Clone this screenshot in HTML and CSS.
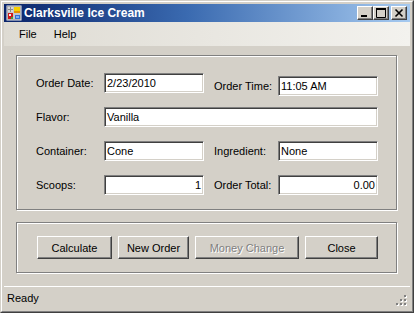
FILE: index.html
```html
<!DOCTYPE html>
<html>
<head>
<meta charset="utf-8">
<title>Clarksville Ice Cream</title>
<link rel="stylesheet" href="styles.css">
</head>
<body>
<div class="window">
  <div class="frame">
    <div class="titlebar">
      <svg class="app-icon" width="16" height="16" viewBox="0 0 16 16">
        <rect x="1" y="1" width="14" height="14" fill="#c8c8c8" stroke="#f4f4f4" stroke-width="1"/>
        <rect x="1.5" y="1.5" width="13" height="13" fill="none" stroke="#9a9a9a" stroke-width="0.6"/>
        <rect x="2" y="2" width="5" height="5" fill="#d8d8d8"/>
        <path d="M2 4.5H7M4.5 2V7" stroke="#8a8a8a" stroke-width="1"/>
        <rect x="8" y="2" width="6" height="6" fill="#f8d000"/>
        <rect x="8" y="6" width="6" height="2" fill="#e89000"/>
        <rect x="2" y="8" width="5" height="6" fill="#d01818"/>
        <rect x="3" y="9" width="2" height="2" fill="#f0f0f0"/>
        <rect x="5" y="12" width="2" height="2" fill="#40a040"/>
        <rect x="9" y="10" width="5" height="4" fill="#3070d8"/>
        <rect x="10" y="11" width="3" height="2" fill="#80b0f0"/>
      </svg>
      <span class="title">Clarksville Ice Cream</span>
      <div class="caption-buttons">
        <div class="cap-btn">
          <svg width="14" height="12" viewBox="0 0 14 12"><rect x="3" y="8" width="6" height="2" fill="#000"/></svg>
        </div>
        <div class="cap-btn">
          <svg width="14" height="12" viewBox="0 0 14 12"><path d="M2.5 1.5H11.5V10.5H2.5Z" fill="none" stroke="#000"/><rect x="2" y="1" width="10" height="2" fill="#000"/></svg>
        </div>
        <div class="cap-btn close">
          <svg width="14" height="12" viewBox="0 0 14 12"><path d="M3.5 2.5L10.5 9.5M10.5 2.5L3.5 9.5" stroke="#000" stroke-width="1.6"/></svg>
        </div>
      </div>
    </div>
    <div class="menubar">
      <span class="menu-item">File</span>
      <span class="menu-item">Help</span>
    </div>
    <div class="client">
      <div class="group g1">
        <div class="form-grid">
          <div class="lbl">Order Date:</div>
          <div class="tb">2/23/2010</div>
          <div class="lbl lbl2 shift">Order Time:</div>
          <div class="tb shift">11:05 AM</div>

          <div class="lbl">Flavor:</div>
          <div class="tb wide">Vanilla</div>

          <div class="lbl">Container:</div>
          <div class="tb">Cone</div>
          <div class="lbl lbl2">Ingredient:</div>
          <div class="tb">None</div>

          <div class="lbl">Scoops:</div>
          <div class="tb right">1</div>
          <div class="lbl lbl2">Order Total:</div>
          <div class="tb right">0.00</div>
        </div>
      </div>
      <div class="group g2">
        <div class="btn w-calc">Calculate</div>
        <div class="btn w-new">New Order</div>
        <div class="btn w-money disabled">Money Change</div>
        <div class="btn w-close">Close</div>
      </div>
    </div>
    <div class="statusbar">
      <span class="status-text">Ready</span>
      <svg class="grip" width="12" height="12" viewBox="0 0 12 12">
        <g fill="#fff">
          <rect x="10" y="2" width="2" height="2"/>
          <rect x="6" y="6" width="2" height="2"/>
          <rect x="10" y="6" width="2" height="2"/>
          <rect x="2" y="10" width="2" height="2"/>
          <rect x="6" y="10" width="2" height="2"/>
          <rect x="10" y="10" width="2" height="2"/>
        </g>
        <g fill="#808080">
          <rect x="9" y="1" width="2" height="2"/>
          <rect x="5" y="5" width="2" height="2"/>
          <rect x="9" y="5" width="2" height="2"/>
          <rect x="1" y="9" width="2" height="2"/>
          <rect x="5" y="9" width="2" height="2"/>
          <rect x="9" y="9" width="2" height="2"/>
        </g>
      </svg>
    </div>
  </div>
</div>
</body>
</html>
```

FILE: styles.css
```css
html, body {
  margin: 0;
  padding: 0;
  background: #d4d0c8;
}

body {
  font-family: "Liberation Sans", Arial, sans-serif;
  font-size: 11px;
  color: #000;
}

.window {
  width: 414px;
  height: 313px;
  box-sizing: border-box;
  border: 1px solid;
  border-color: #d4d0c8 #404040 #404040 #d4d0c8;
}

.frame {
  height: 100%;
  box-sizing: border-box;
  border: 1px solid;
  border-color: #ffffff #808080 #808080 #ffffff;
  padding: 2px;
  display: flex;
  flex-direction: column;
  background: #d4d0c8;
}

.titlebar {
  height: 18px;
  flex: none;
  display: flex;
  align-items: center;
  padding: 0 3px 0 2px;
  background: linear-gradient(to right, #0a246a 0%, #3a6ab0 45%, #a6caf0 100%);
}

.app-icon {
  flex: none;
  display: block;
}

.title {
  margin-left: 2px;
  color: #fff;
  font-weight: bold;
  font-size: 12px;
  white-space: nowrap;
}

.caption-buttons {
  margin-left: auto;
  display: flex;
}

.cap-btn {
  width: 16px;
  height: 14px;
  box-sizing: border-box;
  border: 1px solid;
  border-color: #ffffff #404040 #404040 #ffffff;
  box-shadow: inset -1px -1px 0 #808080;
  background: #d4d0c8;
}

.cap-btn svg {
  display: block;
}

.cap-btn.close {
  margin-left: 2px;
}

.menubar {
  height: 24px;
  flex: none;
  display: flex;
  align-items: center;
  gap: 17px;
  padding-left: 15px;
  background: linear-gradient(to right, #dedbd3, #f3f2ee);
}

.client {
  height: 240px;
  flex: none;
  box-sizing: border-box;
  padding: 9px 0 0 12px;
  display: flex;
  flex-direction: column;
}

.group {
  width: 381px;
  box-sizing: border-box;
  border: 1px solid #808080;
  box-shadow: inset 1px 1px 0 #fff, 1px 1px 0 #fff;
}

.g1 {
  height: 155px;
  padding: 17px 0 0 19px;
}

.g2 {
  margin-top: 12px;
  height: 51px;
  padding: 13px 0 0 20px;
  display: flex;
  gap: 6px;
}

.form-grid {
  display: grid;
  grid-template-columns: 68px 100px 74px 100px;
  grid-auto-rows: 20px;
  row-gap: 14px;
}

.lbl {
  height: 20px;
  display: flex;
  align-items: center;
  white-space: nowrap;
}

.lbl2 {
  padding-left: 10px;
}

.shift {
  margin-top: 3px;
}

.tb {
  height: 20px;
  box-sizing: border-box;
  border: 1px solid;
  border-color: #808080 #ffffff #ffffff #808080;
  box-shadow: inset 1px 1px 0 #404040, inset -1px -1px 0 #d4d0c8;
  background: #fff;
  padding: 0 2px 0 2px;
  display: flex;
  align-items: center;
  white-space: nowrap;
}

.tb.wide {
  grid-column: 2 / 5;
}

.tb.right {
  justify-content: flex-end;
}

.btn {
  height: 23px;
  box-sizing: border-box;
  border: 1px solid;
  border-color: #ffffff #404040 #404040 #ffffff;
  box-shadow: inset -1px -1px 0 #808080;
  background: #d4d0c8;
  display: flex;
  align-items: center;
  justify-content: center;
  white-space: nowrap;
}

.w-calc { width: 75px; }
.w-new { width: 71px; }
.w-money { width: 104px; }
.w-close { width: 73px; }

.btn.disabled {
  color: #808080;
  text-shadow: 1px 1px 0 #fff;
}

.statusbar {
  flex: 1;
  border-top: 1px solid #fff;
  display: flex;
  align-items: center;
  padding-left: 3px;
  position: relative;
}

.grip {
  position: absolute;
  right: 3px;
  bottom: 3px;
  display: block;
}
```
